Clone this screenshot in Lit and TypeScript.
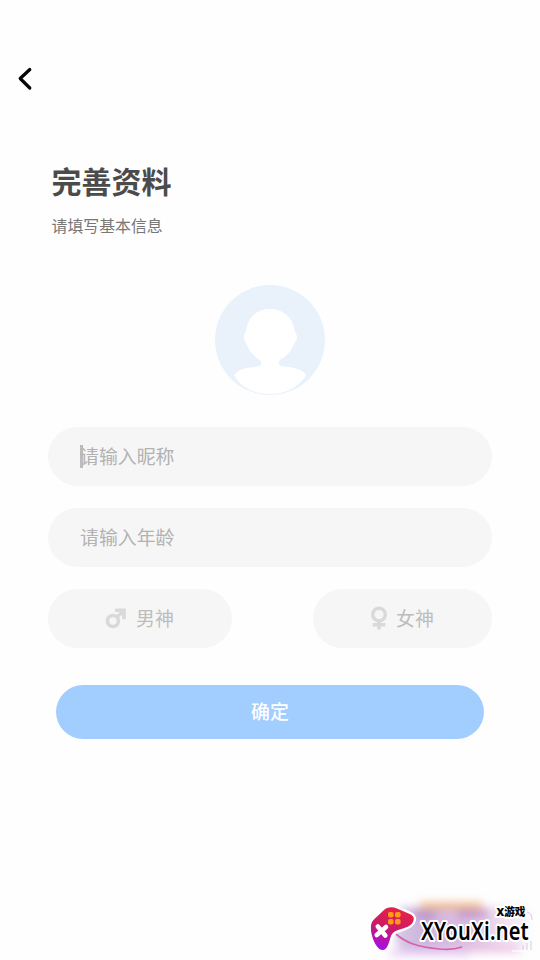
import { LitElement, html, css, svg } from "lit";
import { customElement, property } from "lit/decorators.js";

const maleIcon = svg`<svg width="24" height="24" viewBox="0 0 24 24" fill="none" stroke="#d9d9d9" stroke-width="3.6">
  <circle cx="8.900" cy="15" r="5.500"/><path d="M13 11 19.500 5M11 4.200h9v9"/></svg>`;

const femaleIcon = svg`<svg width="24" height="24" viewBox="0 0 24 24" fill="none" stroke="#d9d9d9" stroke-width="3.4">
  <circle cx="12" cy="8.500" r="6.300"/><path d="M12 14.500v9M5.600 18.700h12.800"/></svg>`;

@customElement("profile-avatar")
class ProfileAvatar extends LitElement {
  static styles = css`
    :host { display: block; width: 110px; height: 110px; }
    svg { display: block; }
  `;
  render() {
    return html`<svg width="110" height="110" viewBox="0 0 110 110">
      <circle cx="55" cy="55" r="55" fill="#e9f2fb"/>
      <path fill="#fff" d="M55 24C42 24 33.500 32 31.500 44c-.5 3-2.700 5.500-2.700 8.500 0 3 2.200 5 3.200 7.500 2.500 6.500 6.500 11 12 14.500 3.500 2.500 3 6-.5 6.800-8 1.700-19 1-24.500 9C26 102.500 39 109 55 109s28-6.500 36.500-18.700C86 82.500 75 82.500 67 81.300c-3.500-.8-4.500-4.300-1.500-6.800 6-3.500 10.500-8 13-14.500 1-2.500 3.500-4.500 3.500-7.500 0-3-2.200-5.500-2.700-8.500C77.300 32 68 24 55 24Z"/>
    </svg>`;
  }
}

@customElement("pill-field")
class PillField extends LitElement {
  @property() hint = "";
  @property({ type: Boolean }) active = false;
  static styles = css`
    :host { display: block; }
    .field {
      box-sizing: border-box; height: 59px; padding: 0 0 1px 32px; border-radius: 30px;
      background: #f6f6f6; color: #b2b2b2; display: flex; align-items: center;
      font-size: 18.9px; line-height: 28px;
    }
    .caret { width: 2.500px; height: 23px; margin-right: -2.500px; background: #bcbcbc; }
  `;
  render() {
    return html`<div class="field">${this.active ? html`<span class="caret"></span>` : ""}<span>${this.hint}</span></div>`;
  }
}

@customElement("site-badge")
class SiteBadge extends LitElement {
  static styles = css`
    :host { display: block; width: 180px; height: 70px; }
    svg { display: block; overflow: visible; }
    .domain { font: 600 24.500px "Noto Sans", "Open Sans", sans-serif; letter-spacing: .3px; }
    .brand { font: 900 11px "Noto Sans", "Noto Sans CJK SC", sans-serif; }
    .outlined { fill: #000; stroke: #fff; stroke-width: 4px; stroke-linejoin: round; paint-order: stroke; }
  `;
  render() {
    return html`<svg width="180" height="70" viewBox="0 0 180 70">
      <defs>
        <filter id="soft" x="-20%" y="-40%" width="140%" height="180%"><feGaussianBlur stdDeviation="4.500"/></filter>
        <linearGradient id="haze"><stop stop-color="#c3b1dc"/><stop offset=".2" stop-color="#b995cd"/><stop offset=".55" stop-color="#cfa2d3"/><stop offset=".8" stop-color="#e9d0ea"/><stop offset="1" stop-color="#f4edf8"/></linearGradient>
        <linearGradient id="pad" x1=".6" y1="0" x2=".3" y2="1"><stop stop-color="#e82246"/><stop offset=".48" stop-color="#cb1b65"/><stop offset="1" stop-color="#a60ee8"/></linearGradient>
      </defs>
      <g filter="url(#soft)">
        <rect x="36" y="17" width="132" height="44" rx="10" fill="url(#haze)" opacity=".7"/>
        <path d="M60 16h62" stroke="#edb78a" stroke-width="7"/>
        <path d="M54 25h22M98 24h30" stroke="#a872bd" stroke-width="7" opacity=".6"/>
        <path d="M30 63h80" stroke="#e4c2f1" stroke-width="7" opacity=".7"/>
        <path d="M110 59h50" stroke="#eab9df" stroke-width="7" opacity=".7"/>
      </g>
      <path d="M162 21h2q7 0 7 7v24q0 9-9 9h-10" fill="none" stroke="#fff" stroke-width="1.500" opacity=".8"/>
      <path d="M167 22q5 1 5 8M167 53v7M163 55v5M171 51v9" fill="none" stroke="#d5bad5" stroke-width="1" opacity=".8"/>
      <path d="M36 44c9 8 20 13 44 15 10 1 16 0 22-2" fill="none" stroke="#d661ad" stroke-width="1.700"/>
      <path d="M24 20c3-3 8-3.500 13-1.500l11 4.700c5 2 6.500 4 5.500 7-1 4-4 6-9 7.800-9 2.500-11.500 3.500-13.500 8-2 6-3.500 14-8.500 14-6 0-11-13-11.500-20-.3-7 1-9 5-12.500Z" fill="url(#pad)" stroke="#fff" stroke-width="5" paint-order="stroke" stroke-linejoin="round"/>
      <g fill="#ff9c16"><rect x="28" y="22" width="5.600" height="5.600" rx="2"/><rect x="35" y="22" width="5.600" height="5.600" rx="2"/><rect x="28" y="29" width="5.600" height="5.600" rx="2"/><rect x="35" y="29" width="5.600" height="5.600" rx="2"/></g>
      <path d="M17.800 36.500l7.500 9M26 37l-9.300 8" stroke="#fff" stroke-width="4.600" stroke-linecap="round"/>
      <text class="domain outlined" x="61" y="50.300" textLength="108" lengthAdjust="spacingAndGlyphs">XYouXi.net</text>
      <text class="brand outlined" x="136.500" y="26" textLength="29" lengthAdjust="spacingAndGlyphs">X游戏</text>
    </svg>`;
  }
}

@customElement("app-root")
class AppRoot extends LitElement {
  static styles = css`
    :host {
      display: block; position: relative; box-sizing: border-box; width: 540px; height: 960px;
      overflow: hidden; background: #fefefe; font-family: "Noto Sans CJK SC", sans-serif;
    }
    .bar { height: 96px; padding: 66px 0 0 16px; box-sizing: border-box; }
    .bar svg { display: block; }
    .heading { padding: 62px 51.500px 0; }
    h1 { margin: 0; font-size: 30px; line-height: 44px; font-weight: 700; color: #4b4b4b; }
    p { margin: 12px 0 0; font-size: 15.900px; line-height: 24px; color: #777; }
    .avatar { display: flex; justify-content: center; margin: 47px 1px 0 0; }
    .form { display: flex; flex-direction: column; gap: 22px; margin: 32px 48px 0; }
    .choices { display: flex; justify-content: space-between; }
    .choice {
      box-sizing: border-box; height: 59px; border-radius: 30px; background: #f6f6f6; color: #bdbdbd;
      display: flex; align-items: center; gap: 8px; padding-bottom: 1px; font-size: 18.900px; line-height: 28px;
    }
    .choice svg { display: block; }
    .male { width: 184px; padding-left: 56px; }
    .female { width: 179px; padding-left: 54px; gap: 5px; }
    .submit {
      box-sizing: border-box; height: 54px; padding-bottom: 3px; margin: 37px 56px 0; border-radius: 27px; background: #a2cdff; color: #fff;
      display: flex; align-items: center; justify-content: center; font-size: 18.900px; font-weight: 500;
    }
    .badge { position: absolute; right: 0; bottom: 0; }
  `;
  render() {
    return html`
      <div class="bar"><svg width="20" height="25" viewBox="0 0 20 25"><path d="M13.800 3.500 4.200 12.500l9.600 9.500" fill="none" stroke="#050505" stroke-width="3.200" stroke-linecap="round" stroke-linejoin="round"/></svg></div>
      <div class="heading"><h1>完善资料</h1><p>请填写基本信息</p></div>
      <div class="avatar"><profile-avatar></profile-avatar></div>
      <div class="form">
        <pill-field hint="请输入昵称" active></pill-field>
        <pill-field hint="请输入年龄"></pill-field>
        <div class="choices">
          <div class="choice male">${maleIcon}<span>男神</span></div>
          <div class="choice female">${femaleIcon}<span>女神</span></div>
        </div>
      </div>
      <div class="submit">确定</div>
      <site-badge class="badge"></site-badge>
    `;
  }
}
